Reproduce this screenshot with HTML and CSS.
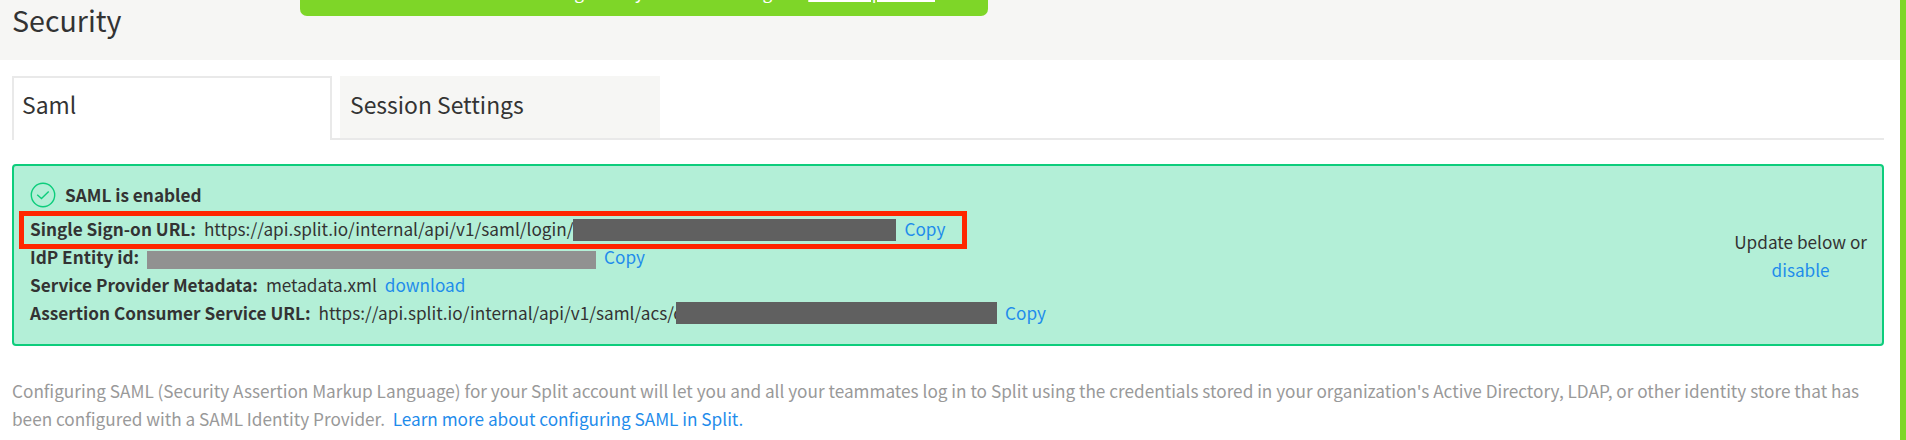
FILE: index.html
```html
<!DOCTYPE html>
<html lang="en">
<head>
<meta charset="utf-8">
<title>Security</title>
<link rel="stylesheet" href="styles.css">
</head>
<body>
<div class="page">
  <header class="header"><h1 class="title">Security</h1></header>
  <div class="banner"><span>The trial is ending while you are not using it.</span><a class="banner-link">See the plan list</a></div>
  <main class="content">
    <nav class="tabs">
      <a class="tab tab-active">Saml</a>
      <span class="tab-gap"></span>
      <a class="tab">Session Settings</a>
      <span class="tab-rest"></span>
    </nav>
    <section class="notice">
      <div class="details">
        <div class="status">
          <svg class="check" viewBox="0 0 26 26"><circle cx="13" cy="13" r="11.7"/><path d="M7.2 12.7l4.3 3.8 7.2-7.1"/></svg>
          <b>SAML is enabled</b>
        </div>
        <div class="row highlighted"><b class="label">Single Sign-on URL:</b><span class="value">https://api.split.io/internal/api/v1/saml/login/</span><i class="mask mask-sso"></i><a class="link">Copy</a></div>
        <div class="row"><b class="label">IdP Entity id:</b><i class="mask mask-idp"></i><a class="link">Copy</a></div>
        <div class="row"><b class="label">Service Provider Metadata:</b><span class="value">metadata.xml</span><a class="link">download</a></div>
        <div class="row"><b class="label">Assertion Consumer Service URL:</b><span class="value">https://api.split.io/internal/api/v1/saml/acs/c</span><i class="mask mask-acs"></i><a class="link">Copy</a></div>
      </div>
      <div class="actions"><span>Update below or</span><a class="link-plain">disable</a></div>
    </section>
    <p class="help">Configuring SAML (Security Assertion Markup Language) for your Split account will let you and all your teammates log in to Split using the credentials stored in your organization's Active Directory, LDAP, or other identity store that has<br>been configured with a SAML Identity Provider.&nbsp; <a class="link-plain">Learn more about configuring SAML in Split.</a></p>
  </main>
</div>
</body>
</html>
```
FILE: styles.css
```css
*, *::after { box-sizing: border-box; }
body {
  margin: 0;
  font-family: "Noto Sans CJK SC", "Noto Sans", sans-serif;
  font-size: 17.2px;
  line-height: 28px;
  color: #333;
  background: #fff;
}
.page {
  position: relative;
  height: 440px;
  overflow: hidden;
  border-right: 6px solid #7ed628;
}
.header { height: 60px; background: #f6f6f4; padding: 0 12px; }
.title { margin: 0; font-size: 28.6px; line-height: 39px; font-weight: 400; }
.banner {
  position: absolute;
  left: 300px;
  top: -34px;
  width: 688px;
  height: 50px;
  padding: 12px 53px 0 0;
  display: flex;
  justify-content: flex-end;
  gap: 16px;
  border-radius: 7px;
  background: #7ed628;
  color: #fff;
  white-space: nowrap;
}
.banner-link { text-decoration: underline 2px; }
.content { padding: 16px 16px 0 12px; }
.tabs { display: flex; height: 64px; }
.tab {
  width: 320px;
  padding: 0 10px;
  font-size: 22.9px;
  line-height: 56px;
  background: #f6f6f4;
  border-bottom: 2px solid #e9e9e9;
}
.tab-active {
  padding: 0 8px;
  line-height: 52px;
  background: #fff;
  border: 2px solid #e9e9e9;
  border-bottom: 0;
}
.tab-gap { width: 8px; border-bottom: 2px solid #e9e9e9; }
.tab-rest { flex: 1; border-bottom: 2px solid #e9e9e9; }
.notice {
  display: flex;
  justify-content: space-between;
  height: 182px;
  margin-top: 24px;
  padding: 12px 15px 0 16px;
  background: #b3efd7;
  border: 2px solid #0dcd7c;
  border-radius: 4px;
}
.details { display: flex; flex-direction: column; }
.status { display: flex; align-items: center; height: 34px; gap: 9px; margin-bottom: 3px; }
.check { width: 26px; height: 26px; fill: none; stroke: #0dcd7c; stroke-width: 1.4; }
.row { display: flex; align-items: center; height: 28px; white-space: nowrap; }
.label { margin-right: 8px; }
.mask { height: 22px; background: #606060; }
.mask-sso { width: 323px; margin-top: 2px; }
.mask-idp { width: 449px; height: 18px; margin-top: 6px; background: #919191; }
.mask-acs { width: 321px; margin-left: -6px; }
.link { color: #1f8ceb; margin-left: 8px; }
.link-plain { color: #1f8ceb; }
.highlighted { position: relative; }
.highlighted::after {
  content: "";
  position: absolute;
  left: -11px;
  top: -4px;
  width: 948px;
  height: 38px;
  border: 5px solid #ff2600;
}
.actions { display: flex; flex-direction: column; align-items: center; padding-top: 50px; }
.help { margin: 31px 0 0; color: #999; white-space: nowrap; }
```
